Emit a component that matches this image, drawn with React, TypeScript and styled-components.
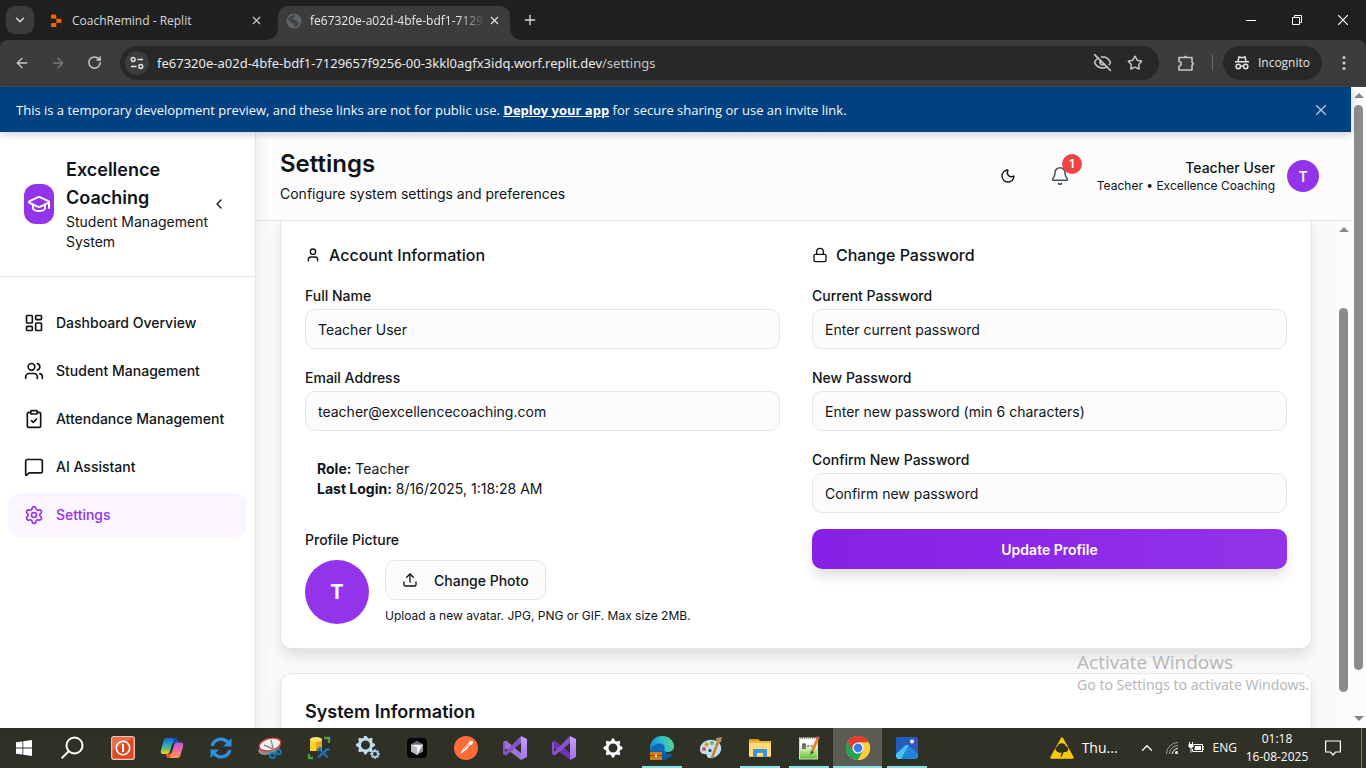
import React from "react";
import styled, { createGlobalStyle, css } from "styled-components";
import {
  ArrowLeft, ArrowRight, Bell, ChevronDown, ChevronLeft, ChevronUp, ClipboardCheck, EyeOff,
  GraduationCap, LayoutDashboard, Lock, MessageSquare, Moon, Plus,
  RotateCw, Settings as SettingsIcon, Star, Upload, User, Users, X,
} from "lucide-react";

const inter = `Inter, "Liberation Sans", sans-serif`;
const system = `"Open Sans", "Noto Sans", sans-serif`;
const systemWide = `"Noto Sans", "Open Sans", sans-serif`;
const ink = "#0f1419";
const line = "#e1e7f2";
const purple = "#9333ea";

const GlobalStyle = createGlobalStyle`
  *, *::before, *::after { box-sizing: border-box; }
  body { margin: 0; font-family: ${inter}; color: ${ink}; }
  h1, h2, h3, p { margin: 0; }
  button { border: 0; padding: 0; background: none; font: inherit; color: inherit; cursor: pointer; }
  svg { display: block; flex: none; }
`;

const Screen = styled.div`
  height: 100vh;
  display: flex;
  flex-direction: column;
  overflow: hidden;
`;

/* Browser window */
const TabStrip = styled.div`
  flex: none;
  height: 40px;
  display: flex;
  align-items: flex-end;
  background: #1f2120;
  color: #d8d9d9;
  font: 12px/16px ${system};
`;
const TabMenu = styled.button`
  width: 28px;
  height: 28px;
  margin: 0 6px 6px;
  display: grid;
  place-items: center;
  border-radius: 9px;
  background: #3c3c3c;
`;
const Tab = styled.div<{ $active?: boolean }>`
  position: relative;
  width: ${(p) => (p.$active ? 232 : 238)}px;
  height: 34px;
  padding: 0 ${(p) => (p.$active ? 8 : 14)}px 5px 8px;
  display: flex;
  align-items: center;
  gap: 8px;
  border-radius: 10px 10px 0 0;
  ${(p) =>
    p.$active &&
    css`
      background: #3c3c3c;
      color: #e8e8e8;
      &::before, &::after {
        content: "";
        position: absolute;
        bottom: 0;
        width: 10px;
        height: 10px;
      }
      &::before { left: -10px; background: radial-gradient(circle at 0 0, transparent 9px, #3c3c3c 10px); }
      &::after { right: -10px; background: radial-gradient(circle at 100% 0, transparent 9px, #3c3c3c 10px); }
    `}
`;
const TabTitle = styled.span<{ $fade?: boolean }>`
  flex: 1;
  min-width: 0;
  white-space: nowrap;
  ${(p) =>
    p.$fade &&
    css`
      margin-right: -8px;
      mask-image: linear-gradient(90deg, #000 84%, transparent);
    `}
`;
const TabButton = styled.button`
  width: 16px;
  height: 16px;
  display: grid;
  place-items: center;
`;
const NewTab = styled(TabButton)`
  margin: 0 0 12px 12px;
`;
const WindowButtons = styled.div`
  margin-left: auto;
  height: 40px;
  display: flex;
  color: #fff;
`;
const WindowButton = styled.button`
  width: 46px;
  display: grid;
  place-items: center;
`;
const ToolbarBack = styled.div`
  flex: none;
  background: #1f2120;
`;
const Toolbar = styled.div`
  height: 47px;
  padding: 0 12px 1px;
  display: flex;
  align-items: center;
  background: #3c3c3c;
  border-bottom: 1px solid #4a4745;
  border-radius: 8px 8px 0 0;
  color: #c7c7c7;
  font: 13px/18px ${system};
`;
const NavButtons = styled.div`
  display: flex;
  gap: 16px;
  margin-right: 16px;
`;
const ToolButton = styled.button<{ $dim?: boolean }>`
  width: 20px;
  height: 20px;
  display: grid;
  place-items: center;
  opacity: ${(p) => (p.$dim ? 0.45 : 1)};
`;
const AddressBar = styled.div`
  flex: 1;
  height: 34px;
  padding: 0 14px 0 5px;
  display: flex;
  align-items: center;
  gap: 12px;
  border-radius: 17px;
  background: #282828;
`;
const SiteInfo = styled.button`
  width: 24px;
  height: 24px;
  display: grid;
  place-items: center;
  border-radius: 50%;
  background: #3c3c3c;
  color: #e3e3e3;
`;
const Url = styled.div`
  flex: 1;
  margin-left: -4px;
  white-space: nowrap;
  color: #c4c7c5;
  font: 13px/18px ${systemWide};
  span { color: #e8eaed; }
`;
const Divider = styled.span`
  width: 1px;
  height: 16px;
  margin: 0 10px 0 16px;
  background: #6a6a6a;
`;
const Incognito = styled.button`
  height: 34px;
  margin-right: 12px;
  padding: 0 12px 0 11px;
  display: flex;
  align-items: center;
  gap: 8px;
  border-radius: 17px;
  background: #282828;
  color: #e3e3e3;
  font: 12px/16px ${system};
`;
const ExtensionSlot = styled.div`
  margin-left: 17px;
`;

/* Scrollbars */
const Scrollbar = styled.div`
  flex: none;
  width: 15px;
  display: flex;
  flex-direction: column;
  align-items: center;
  background: #fcfcfc;
`;
const Arrow = styled.span<{ $down?: boolean }>`
  margin: ${(p) => (p.$down ? "5px 0 7px" : "6px 0 7px")};
  border: solid transparent;
  border-width: 0 5px 5px;
  border-bottom-color: #858585;
  ${(p) => p.$down && "transform: rotate(180deg);"}
`;
const Thumb = styled.span<{ $size: number }>`
  flex: ${(p) => p.$size};
  width: 9px;
  border-radius: 5px;
  background: #8b8b8b;
`;
const Track = styled.span<{ $size: number }>`
  flex: ${(p) => p.$size};
`;

/* Web page */
const Viewport = styled.div`
  flex: 1;
  min-height: 0;
  display: flex;
`;
const Page = styled.div`
  flex: 1;
  min-width: 0;
  display: flex;
  flex-direction: column;
`;
const Banner = styled.div`
  position: relative;
  z-index: 2;
  flex: none;
  height: 45px;
  padding: 0 22px 0 16px;
  display: flex;
  align-items: center;
  justify-content: space-between;
  background: #004182;
  box-shadow: 0 2px 8px rgba(0, 0, 0, 0.2);
  color: #f5f9fc;
  font: 13px/20px ${system};
  a { color: #fff; font-weight: 700; }
`;
const AppLayout = styled.div`
  flex: 1;
  min-height: 0;
  display: flex;
`;
const Sidebar = styled.aside`
  position: relative;
  z-index: 1;
  flex: none;
  width: 256px;
  border-right: 1px solid ${line};
  background: #fff;
  box-shadow: 4px 0 14px rgba(0, 0, 0, 0.06);
`;
const Brand = styled.div`
  padding: 24px;
  display: flex;
  align-items: center;
  border-bottom: 1px solid ${line};
`;
const Logo = styled.div`
  flex: none;
  width: 30px;
  height: 40px;
  margin-right: 12px;
  display: grid;
  place-items: center;
  border-radius: 12px;
  background: ${purple};
  color: #fff;
`;
const BrandText = styled.div`
  width: 145px;
  h2 { font-size: 18px; line-height: 28px; font-weight: 600; }
  p { font-size: 14px; line-height: 20px; }
`;
const Collapse = styled.button``;
const Nav = styled.nav`
  padding: 24px 8px;
  display: flex;
  flex-direction: column;
  gap: 4px;
`;
const NavLink = styled.a<{ $active?: boolean }>`
  height: 44px;
  padding: 0 16px;
  display: flex;
  align-items: center;
  gap: 12px;
  border-radius: 12px;
  background: ${(p) => (p.$active ? "#faf5ff" : "transparent")};
  color: ${(p) => (p.$active ? purple : ink)};
  font-size: 14px;
  line-height: 20px;
  font-weight: 500;
  text-decoration: none;
`;
const Content = styled.div`
  flex: 1;
  min-width: 0;
  display: flex;
  flex-direction: column;
  background: #fafafa;
`;
const Header = styled.header`
  flex: none;
  padding: 16px 32px 16px 24px;
  display: flex;
  align-items: center;
  justify-content: space-between;
  background: #fcfcfc;
  border-bottom: 1px solid ${line};
`;
const Heading = styled.div`
  h1 { font-size: 24px; line-height: 32px; font-weight: 600; }
  p { margin-top: 4px; font-size: 14px; line-height: 20px; }
`;
const HeaderActions = styled.div`
  display: flex;
  align-items: center;
`;
const IconButton = styled.button`
  position: relative;
  width: 36px;
  height: 36px;
  margin-right: 16px;
  display: grid;
  place-items: center;
  color: #414d5d;
`;
const Badge = styled.span`
  position: absolute;
  top: -4px;
  right: -4px;
  width: 20px;
  height: 20px;
  border-radius: 50%;
  background: #ef4444;
  color: #fff;
  font-size: 12px;
  line-height: 20px;
  font-weight: 600;
  text-align: center;
`;
const Account = styled.div`
  margin: 0 12px 0 3px;
  text-align: right;
  p { font-size: 14px; line-height: 20px; font-weight: 500; }
  span { display: block; font-size: 12px; line-height: 16px; }
`;
const Avatar = styled.div<{ $size: number }>`
  flex: none;
  width: ${(p) => p.$size}px;
  height: ${(p) => p.$size}px;
  display: grid;
  place-items: center;
  border-radius: 50%;
  background: ${purple};
  color: #fff;
  font-size: ${(p) => (p.$size > 40 ? 20 : 14)}px;
  font-weight: ${(p) => (p.$size > 40 ? 700 : 600)};
`;
const MainArea = styled.div`
  flex: 1;
  min-height: 0;
  display: flex;
`;
const Main = styled.main`
  flex: 1;
  min-width: 0;
  padding: 0 24px;
  overflow: hidden;
`;
const Card = styled.section<{ $open?: boolean }>`
  margin-bottom: 24px;
  padding: ${(p) => (p.$open ? "22px 24px 24px" : "24px")};
  border: 1px solid ${line};
  ${(p) => p.$open && "border-top: 0;"}
  border-radius: ${(p) => (p.$open ? "0 0 12px 12px" : "12px")};
  background: #fff;
  box-shadow: 0 8px 16px -2px rgba(0, 0, 0, 0.13);
  > h2 { font-size: 18px; line-height: 28px; font-weight: 600; }
`;
const Columns = styled.div`
  display: grid;
  grid-template-columns: 1fr 1fr;
  gap: 32px;
`;
const Group = styled.form`
  display: flex;
  flex-direction: column;
  gap: 16px;
`;
const GroupTitle = styled.h3`
  display: flex;
  align-items: center;
  gap: 8px;
  font-size: 16px;
  line-height: 24px;
  font-weight: 500;
`;
const Label = styled.label`
  display: block;
  font-size: 14px;
  line-height: 26px;
  font-weight: 500;
`;
const Input = styled.input`
  display: block;
  width: 100%;
  height: 40px;
  padding: 0 12px;
  border: 1px solid ${line};
  border-radius: 10px;
  background: #fcfcfc;
  color: ${ink};
  font: 14px/20px ${inter};
  &::placeholder { color: ${ink}; opacity: 1; }
`;
const Facts = styled.div`
  padding: 12px;
  font-size: 14px;
  line-height: 20px;
`;
const PhotoRow = styled.div`
  margin-top: 7px;
  display: flex;
  gap: 16px;
  p { margin-top: 8px; font-size: 12px; line-height: 16px; }
`;
const PhotoButton = styled.button`
  height: 40px;
  padding: 0 16px;
  display: flex;
  align-items: center;
  gap: 16px;
  border: 1px solid ${line};
  border-radius: 10px;
  background: #fcfcfc;
  font-size: 14px;
  font-weight: 500;
`;
const Submit = styled.button`
  height: 40px;
  border-radius: 10px;
  background: linear-gradient(90deg, #8620e6, ${purple});
  box-shadow: 0 8px 14px -2px rgba(0, 0, 0, 0.14);
  color: #fff;
  font-size: 14px;
  font-weight: 600;
`;
const Watermark = styled.div`
  position: absolute;
  right: 57px;
  bottom: 73px;
  z-index: 5;
  color: #b7b7b7;
  font: 14px/20px ${systemWide};
  pointer-events: none;
  strong { display: block; font: 19px/26px ${system}; }
`;

/* Desktop taskbar */
const Taskbar = styled.footer`
  flex: none;
  height: 40px;
  display: flex;
  background: #2f3026;
  color: #fff;
  font: 12px/18px ${system};
`;
const TaskButton = styled.button<{ $wide?: number; $active?: boolean; $open?: boolean }>`
  flex: none;
  width: ${(p) => p.$wide ?? 49}px;
  display: grid;
  place-items: center;
  background: ${(p) => (p.$active ? "#5c5c54" : "transparent")};
  background-image: ${(p) => (p.$open ? "linear-gradient(#86e0e6, #86e0e6)" : "none")};
  background-repeat: no-repeat;
  background-position: bottom center;
  background-size: ${(p) => (p.$active ? "100%" : "40px")} 2px;
`;
const Tray = styled.div`
  margin-left: auto;
  display: flex;
  align-items: center;
`;
const Weather = styled.button`
  margin-right: 20px;
  display: flex;
  align-items: center;
  gap: 8px;
  font-size: 14px;
`;
const TrayIcons = styled.div`
  display: flex;
  align-items: center;
  gap: 9px;
`;
const Clock = styled.div`
  width: 80px;
  margin-right: 2px;
  text-align: center;
`;
const ShowDesktop = styled.button`
  width: 5px;
  height: 40px;
  margin-left: 14px;
  border-left: 1px solid #77776f;
`;

const navItems = [
  { label: "Dashboard Overview", Icon: LayoutDashboard },
  { label: "Student Management", Icon: Users },
  { label: "Attendance Management", Icon: ClipboardCheck },
  { label: "AI Assistant", Icon: MessageSquare },
  { label: "Settings", Icon: SettingsIcon, active: true },
];

const gearPath = (cx: number, cy: number, r: number) => {
  const n = 8;
  let d = "";
  for (let i = 0; i < n * 4; i++) {
    const a = ((i - 0.5) / (n * 4)) * Math.PI * 2;
    const q = i % 4 < 2 ? r : r * 0.78;
    d += `${i ? "L" : "M"}${(cx + q * Math.cos(a)).toFixed(2)} ${(cy + q * Math.sin(a)).toFixed(2)}`;
  }
  return d + "Z";
};

const VisualStudio = ({ id, dark }: { id: string; dark: string }) => (
  <svg width="24" height="24" viewBox="0 0 24 24">
    <defs><linearGradient id={id} x2="0" y2="1"><stop stopColor="#c8a0fb" /><stop offset="1" stopColor="#a470ec" /></linearGradient></defs>
    <path d="M0 6l3-1.500L18 17v7L3 12.500 2 14v3L0 18z" fill={dark} />
    <path d="M0 18V6l2 1v10l1 2.500zM3 19.500L0 18l18-18v7z" fill="#8654ca" />
    <path d="M18 0l6 3v18l-6 3z" fill={`url(#${id})`} />
  </svg>
);

const tasks: { name: string; wide?: number; open?: boolean; active?: boolean; art: React.ReactNode }[] = [
  { name: "Start", wide: 48, art: (
    <svg width="16" height="16" viewBox="0 0 16 16" fill="#fff"><path d="M0 2.300L6.500 1.400v6.200H0zM7.300 1.300L16 0v7.600H7.300zM0 8.400h6.500v6.200L0 13.700zM7.300 8.400H16V16l-8.700-1.300z" /></svg>) },
  { name: "Search", wide: 50, art: (
    <svg width="24" height="24" viewBox="0 0 24 24" fill="none" stroke="#fff" strokeWidth="2"><circle cx="13.500" cy="9.500" r="8" /><path d="M7.700 15.300L.7 22.300" /></svg>) },
  { name: "Power", art: (
    <svg width="24" height="24" viewBox="0 0 24 24"><rect x=".7" y=".7" width="22.600" height="22.600" rx="2" fill="#dc4a24" stroke="#f3c4b4" strokeWidth="1.300" /><path d="M1.500 1.500h21L1.500 14z" fill="#ee8567" opacity=".6" /><circle cx="12" cy="12" r="6.700" fill="none" stroke="#fff" strokeWidth="1.600" /><path d="M12 8v8" stroke="#fff" strokeWidth="2" /></svg>) },
  { name: "Copilot", art: (
    <svg width="24" height="24" viewBox="0 0 24 24">
      <defs>
        <linearGradient id="cpA" x2="0" y2="1"><stop stopColor="#1b62df" /><stop offset=".45" stopColor="#28a9c9" /><stop offset=".7" stopColor="#6fc35b" /><stop offset="1" stopColor="#f5ce21" /></linearGradient>
        <linearGradient id="cpB" x2="0" y2="1"><stop stopColor="#b05be8" /><stop offset=".5" stopColor="#ee6b9b" /><stop offset="1" stopColor="#fb9b52" /></linearGradient>
      </defs>
      <path d="M7 2h8c2 0 2.500 2 3 4.500h-3c-2 0-2.800 1-3.300 3L10 15c-.6 2-1.500 3-3 3H3c-2 0-2.600-1.500-2-4L3.500 5C4.200 3 5 2 7 2z" fill="url(#cpA)" />
      <path d="M13 2h2c2 0 2.500 2 3 4.500h-3L13.500 7z" fill="#174bb2" />
      <path d="M17 22H9c-2 0-2.500-2-3-4h3c2 0 2.800-1 3.300-3L14 9.500c.6-2 1.500-3 3-3h4c2 0 2.600 1.500 2 4L20.500 19c-.6 2-1.500 3-3.500 3z" fill="url(#cpB)" />
      <path d="M6 18h3c2 0 2.800-1 3.300-3L10 22H9c-2 0-2.500-2-3-4z" fill="#e8552c" />
    </svg>) },
  { name: "Sync", art: (
    <svg width="24" height="24" viewBox="0 0 24 24" fill="none" stroke="#2f8fe3" strokeWidth="3.200"><path d="M3 10a9.200 9.200 0 0 1 16-3.500M21 14a9.200 9.200 0 0 1-16 3.500" /><path d="M22.500 2v8.500H14zM1.500 22v-8.500H10z" fill="#2f8fe3" stroke="none" /></svg>) },
  { name: "Snipping Tool", art: (
    <svg width="24" height="24" viewBox="0 0 24 24"><ellipse cx="11" cy="13" rx="11" ry="5.500" transform="rotate(-14 11 13)" fill="#8c8c8c" /><ellipse cx="12" cy="8.500" rx="11" ry="6" transform="rotate(-14 12 8.500)" fill="#f6f3f3" stroke="#d53b3b" strokeWidth="1.300" /><path d="M6 9l9 4 2 1.500M13 4l2.500 10" stroke="#8b9198" strokeWidth="1.500" /><circle cx="14.500" cy="19.500" r="2.500" fill="none" stroke="#187bb8" strokeWidth="1.800" /><circle cx="20.500" cy="16" r="2.300" fill="none" stroke="#187bb8" strokeWidth="1.800" /></svg>) },
  { name: "Database Tools", art: (
    <svg width="24" height="24" viewBox="0 0 24 24"><path d="M3 3.500h12V15H3z" fill="#fbd12b" /><path d="M9 5h6v10H9z" fill="#eda70c" /><ellipse cx="9" cy="3.500" rx="6" ry="2.500" fill="#ffdf73" /><path d="M17 2h5v5M2 18v4h4" fill="none" stroke="#4a9e49" strokeWidth="2.400" /><path d="M12 13l9 8.500M20.500 13L11 21.500" stroke="#1c70b6" strokeWidth="2.400" /><path d="M10 14.500l4-3M18.500 13.500h4.500" stroke="#1c70b6" strokeWidth="2.200" /></svg>) },
  { name: "Services", art: (
    <svg width="24" height="24" viewBox="0 0 24 24" fillRule="evenodd"><path d={gearPath(9.5, 9, 9.5) + "M14 9a4.500 4.500 0 1 0-9 0 4.500 4.500 0 0 0 9 0Z"} fill="#c3dcec" /><path d={gearPath(19, 18, 5) + "M21 18a2 2 0 1 0-4 0 2 2 0 0 0 4 0Z"} fill="#a5cde7" /></svg>) },
  { name: "Cursor", art: (
    <svg width="20" height="20" viewBox="0 0 20 20"><rect width="20" height="20" rx="4" fill="#050505" /><path d="M10 3l6 3.500v7L10 17l-6-3.500v-7z" fill="#8f8f8f" /><path d="M4 6.500h12L10 17V10z" fill="#f2f2f2" /><path d="M10 3l6 3.500H4z" fill="#666" /><path d="M4 6.500L10 10v7l-6-3.500z" fill="#b9b9b9" /></svg>) },
  { name: "Postman", art: (
    <svg width="24" height="24" viewBox="0 0 24 24"><circle cx="12" cy="12" r="12" fill="#ff6c37" /><path d="M15 6.500c1-2 3.500-2.500 4-1s-1 3.500-3 3.500l-4 5-6.500 4.500 4-6z" fill="#fff" /><path d="M10 13l5-5" stroke="#ff6c37" strokeWidth=".9" /></svg>) },
  { name: "Visual Studio 2019", art: <VisualStudio id="vsA" dark="#9d76d4" /> },
  { name: "Visual Studio", art: <VisualStudio id="vsB" dark="#6a34b0" /> },
  { name: "Settings", art: (
    <svg width="20" height="20" viewBox="0 0 20 20" fillRule="evenodd" fill="#fff"><path d={gearPath(10, 10, 9.5) + "M14.500 10a4.500 4.500 0 1 0-9 0 4.500 4.500 0 0 0 9 0Z"} /></svg>) },
  { name: "Edge", open: true, art: (
    <svg width="24" height="24" viewBox="0 0 24 24">
      <defs><linearGradient id="edge" y1=".6" y2=".3"><stop stopColor="#178bd4" /><stop offset=".55" stopColor="#2cc0cf" /><stop offset="1" stopColor="#63d76d" /></linearGradient></defs>
      <circle cx="12" cy="12" r="12" fill="#1168b8" />
      <path d="M0 11C1 4 6 0 12 0c7 0 12 5 12 10 0 4-3 6-6 6-3.500 0-4.500-1.500-4-2.500 1.500-2 .5-6-4-6C6 7.500 2 9 0 14z" fill="url(#edge)" />
      <path d="M14 13.500c-.5 1 .5 2.500 4 2.500 2 0 4-.5 5.500-2.500l.5 2-2.500 3-5-.5z" fill="#2f3026" />
      <path d="M11 12c0 5 4 8 10 6.500-2 3.500-5 5.500-9 5.500z" fill="#0e58a2" />
      <rect y="16" width="12" height="8" fill="#d17d14" /><path d="M0 19.500h12" stroke="#83460c" /><rect x="5" y="18.500" width="2" height="2.500" fill="#ffe08a" />
    </svg>) },
  { name: "Paint", art: (
    <svg width="24" height="24" viewBox="0 0 24 24"><path d="M1 13C1 7 8 3 14 4s9 5 8 10-7 9-12 8c-3-.5-1-4-4-4s-5-1-5-5z" fill="#c1e0ef" /><circle cx="5" cy="13" r="2" fill="#e04b3a" /><circle cx="7.500" cy="8.500" r="2" fill="#f08b28" /><circle cx="13" cy="7" r="2" fill="#71b440" /><circle cx="11" cy="14.500" r="1.500" fill="#2f3026" /><path d="M19 6l-6 16" stroke="#cc7e35" strokeWidth="2.500" /><path d="M17 2l6-1-1 5-4 2z" fill="#b98b64" /></svg>) },
  { name: "File Explorer", open: true, art: (
    <svg width="22" height="20" viewBox="0 0 22 20"><path d="M0 1h9l2 2h11v16H0z" fill="#f6b62c" /><path d="M0 5h22v13H0z" fill="#ffdc77" /><path d="M4 19v-8h14v8h-4v-4H8v4z" fill="#3b94dd" /><path d="M0 1h9v2H0z" fill="#dd9a17" /></svg>) },
  { name: "Notepad++", open: true, art: (
    <svg width="24" height="24" viewBox="0 0 24 24"><defs><linearGradient id="npp" x2="0" y2="1"><stop offset=".3" stopColor="#fff" /><stop offset="1" stopColor="#5dc11e" /></linearGradient></defs><rect x="2.500" y="2" width="18" height="21" fill="url(#npp)" stroke="#d9d9d9" /><path d="M3 2h17" stroke="#777" strokeWidth="1.500" strokeDasharray="1 1" /><path d="M6 13V8h2v5M10 10h2M13.500 10h2" stroke="#222" strokeWidth="1.200" fill="none" /><path d="M20.500 3L15 16" stroke="#df8d22" strokeWidth="3" /><path d="M14 15l3 1-3.500 3z" fill="#443" /><path d="M20 0l3 1.500-1 2-3-1z" fill="#d9564a" /></svg>) },
  { name: "Chrome", open: true, active: true, art: (
    <svg width="24" height="24" viewBox="0 0 24 24"><circle cx="12" cy="12" r="12" fill="#ffcd40" /><path d="M12 12L1.600 6A12 12 0 0 0 12 24l5.200-9z" fill="#23a455" /><path d="M12 6.500h10.700A12 12 0 0 0 1.600 6L7 15z" fill="#e33b2e" /><path d="M12 6.500h10.700A12 12 0 0 1 12 24l5-9z" fill="#ffcd40" /><circle cx="12" cy="12" r="5.600" fill="#fff" /><circle cx="12" cy="12" r="4.400" fill="#3b7ded" /></svg>) },
  { name: "Photos", open: true, art: (
    <svg width="22" height="22" viewBox="0 0 22 22"><defs><linearGradient id="pho" x2="1" y2="1"><stop stopColor="#1b5fbd" /><stop offset="1" stopColor="#3e55b6" /></linearGradient></defs><rect width="22" height="22" rx="2" fill="url(#pho)" /><path d="M0 17L9.500 8.500c1-.8 2-.8 3 0L22 17v3l-2 2H2l-2-2z" fill="#2186da" /><path d="M0 17L9.500 8.500c1-.8 2-.8 3 0L5 22H2l-2-2z" fill="#49c5f4" /><circle cx="16" cy="4.500" r="2" fill="#fff" /></svg>) },
];

const Field = ({ id, label, ...rest }: { id: string; label: string } & React.InputHTMLAttributes<HTMLInputElement>) => (
  <div>
    <Label htmlFor={id}>{label}</Label>
    <Input id={id} {...rest} />
  </div>
);

export default function App() {
  return (
    <Screen>
      <GlobalStyle />
      <TabStrip>
        <TabMenu aria-label="Search tabs"><ChevronDown size={14} strokeWidth={2.5} /></TabMenu>
        <Tab>
          <svg width="16" height="16" viewBox="0 0 16 16" fill="#f26207"><path d="M3 2.500C3 2 3.400 1.600 4 1.600h3.500c.5 0 .8.400.8.900v3.200H4c-.6 0-1-.4-1-.9zM8.300 5.700h4.300c.5 0 .9.400.9.900V9c0 .5-.4.900-.9.900H8.300zM3 10.800c0-.5.400-.9 1-.9h4.300v3.300c0 .5-.3.900-.8.900H4c-.6 0-1-.4-1-.9z" /></svg>
          <TabTitle>CoachRemind - Replit</TabTitle>
          <TabButton aria-label="Close tab"><X size={13} /></TabButton>
        </Tab>
        <Tab $active>
          <svg width="16" height="16" viewBox="0 0 16 16"><circle cx="8" cy="8" r="7.500" fill="#5f6469" /><path d="M2 6c2-3 4-4 7-4 0 2-1 2-2 3s1 2 3 2 1 3 3 3c0 2-2 4-5 4 0-2 1-3-1-4S3 9 2 6z" fill="#3c3c3c" opacity=".85" /></svg>
          <TabTitle $fade>fe67320e-a02d-4bfe-bdf1-7129</TabTitle>
          <TabButton aria-label="Close tab"><X size={13} /></TabButton>
        </Tab>
        <NewTab aria-label="New tab"><Plus size={16} /></NewTab>
        <WindowButtons>
          <WindowButton aria-label="Minimize"><svg width="10" height="10" viewBox="0 0 10 10"><path d="M0 5.500h10" stroke="#fff" /></svg></WindowButton>
          <WindowButton aria-label="Restore"><svg width="10" height="10" viewBox="0 0 10 10" fill="none" stroke="#fff"><path d="M.5 2.500h7v7h-7zM2.500 2.500v-2h7v7h-2" /></svg></WindowButton>
          <WindowButton aria-label="Close"><svg width="10" height="10" viewBox="0 0 10 10"><path d="M0 0l10 10M10 0L0 10" stroke="#fff" strokeWidth="1.200" /></svg></WindowButton>
        </WindowButtons>
      </TabStrip>
      <ToolbarBack>
        <Toolbar>
          <NavButtons>
            <ToolButton aria-label="Back"><ArrowLeft size={16} /></ToolButton>
            <ToolButton aria-label="Forward" $dim><ArrowRight size={16} /></ToolButton>
            <ToolButton aria-label="Reload"><RotateCw size={15} strokeWidth={2.4} /></ToolButton>
          </NavButtons>
          <AddressBar>
            <SiteInfo aria-label="Site information">
              <svg width="14" height="14" viewBox="0 0 14 14" fill="none" stroke="currentColor" strokeWidth="1.500"><circle cx="3.200" cy="3.500" r="1.900" /><path d="M7.500 3.500H13M1 10.500h5.500" /><circle cx="10.800" cy="10.500" r="1.900" /></svg>
            </SiteInfo>
            <Url><span>fe67320e-a02d-4bfe-bdf1-7129657f9256-00-3kkl0agfx3idq.worf.replit.dev</span>/settings</Url>
            <ToolButton aria-label="Third-party cookies blocked"><EyeOff size={19} strokeWidth={2} /></ToolButton>
            <ToolButton aria-label="Bookmark this tab"><Star size={16} strokeWidth={2.2} /></ToolButton>
          </AddressBar>
          <ExtensionSlot>
            <ToolButton aria-label="Extensions">
              <svg width="18" height="18" viewBox="0 0 18 18" fill="none" stroke="currentColor" strokeWidth="1.600" strokeLinejoin="round"><path d="M2 3.500h13V8.500c1.300 0 1.300 2.500 0 2.500v5H2v-4c2.800 0 2.800-4.500 0-4.500z" /><path d="M7 3.500c0-2.300 3-2.300 3 0zM15 8c2 0 2 3.200 0 3.200z" fill="currentColor" stroke="none" /></svg>
            </ToolButton>
          </ExtensionSlot>
          <Divider />
          <Incognito>
            <svg width="16" height="16" viewBox="0 0 16 16" fill="none" stroke="currentColor" strokeWidth="1.500"><path d="M4 6l1-4 3 .8L11 2l1 4M1 6.700h14" /><circle cx="4.300" cy="11.500" r="2.200" /><circle cx="11.700" cy="11.500" r="2.200" /><path d="M6.500 11.200c1-.7 2-.7 3 0" /></svg>
            Incognito
          </Incognito>
          <ToolButton aria-label="Menu">
            <svg width="4" height="16" viewBox="0 0 4 16" fill="currentColor"><circle cx="2" cy="2.500" r="1.600" /><circle cx="2" cy="8" r="1.600" /><circle cx="2" cy="13.500" r="1.600" /></svg>
          </ToolButton>
        </Toolbar>
      </ToolbarBack>

      <Viewport>
        <Page>
          <Banner>
            <span>This is a temporary development preview, and these links are not for public use. <a href="#deploy">Deploy your app</a> for secure sharing or use an invite link.</span>
            <TabButton aria-label="Dismiss"><svg width="10" height="10" viewBox="0 0 10 10"><path d="M0 0l10 10M10 0L0 10" stroke="#b7cbe0" strokeWidth="1.300" /></svg></TabButton>
          </Banner>
          <AppLayout>
            <Sidebar>
              <Brand>
                <Logo><GraduationCap size={24} /></Logo>
                <BrandText>
                  <h2>Excellence Coaching</h2>
                  <p>Student Management System</p>
                </BrandText>
                <Collapse aria-label="Collapse sidebar"><ChevronLeft size={16} /></Collapse>
              </Brand>
              <Nav>
                {navItems.map(({ label, Icon, active }) => (
                  <NavLink key={label} href="#" $active={active}><Icon size={20} />{label}</NavLink>
                ))}
              </Nav>
            </Sidebar>
            <Content>
              <Header>
                <Heading>
                  <h1>Settings</h1>
                  <p>Configure system settings and preferences</p>
                </Heading>
                <HeaderActions>
                  <IconButton aria-label="Toggle theme"><Moon size={16} color={ink} /></IconButton>
                  <IconButton aria-label="Notifications"><Bell size={20} strokeWidth={1.8} /><Badge>1</Badge></IconButton>
                  <Account>
                    <p>Teacher User</p>
                    <span>Teacher • Excellence Coaching</span>
                  </Account>
                  <Avatar $size={32}>T</Avatar>
                </HeaderActions>
              </Header>
              <MainArea>
                <Main>
                  <Card $open>
                    <Columns>
                      <Group>
                        <GroupTitle><User size={16} />Account Information</GroupTitle>
                        <Field id="name" label="Full Name" defaultValue="Teacher User" />
                        <Field id="email" label="Email Address" type="email" defaultValue="teacher@excellencecoaching.com" />
                        <Facts>
                          <p><strong>Role:</strong> Teacher</p>
                          <p><strong>Last Login:</strong> 8/16/2025, 1:18:28 AM</p>
                        </Facts>
                        <div>
                          <Label htmlFor="photo">Profile Picture</Label>
                          <PhotoRow>
                            <Avatar $size={64}>T</Avatar>
                            <div>
                              <PhotoButton id="photo" type="button"><Upload size={16} />Change Photo</PhotoButton>
                              <p>Upload a new avatar. JPG, PNG or GIF. Max size 2MB.</p>
                            </div>
                          </PhotoRow>
                        </div>
                      </Group>
                      <Group>
                        <GroupTitle><Lock size={16} />Change Password</GroupTitle>
                        <Field id="current" label="Current Password" type="password" placeholder="Enter current password" />
                        <Field id="new" label="New Password" type="password" placeholder="Enter new password (min 6 characters)" />
                        <Field id="confirm" label="Confirm New Password" type="password" placeholder="Confirm new password" />
                        <Submit type="button">Update Profile</Submit>
                      </Group>
                    </Columns>
                  </Card>
                  <Card>
                    <h2>System Information</h2>
                  </Card>
                </Main>
                <Scrollbar><Arrow /><Track $size={69} /><Thumb $size={384} /><Track $size={36} /></Scrollbar>
              </MainArea>
            </Content>
          </AppLayout>
        </Page>
        <Scrollbar><Arrow /><Thumb $size={565} /><Track $size={41} /><Arrow $down /></Scrollbar>
      </Viewport>

      <Watermark><strong>Activate Windows</strong>Go to Settings to activate Windows.</Watermark>

      <Taskbar>
        {tasks.map((t) => (
          <TaskButton key={t.name} aria-label={t.name} $wide={t.wide} $open={t.open} $active={t.active}>{t.art}</TaskButton>
        ))}
        <Tray>
          <Weather>
            <svg width="24" height="22" viewBox="0 0 24 22"><path d="M12 1.500L22.500 20.500h-21z" fill="#f7c60f" stroke="#f7c60f" strokeWidth="2.500" strokeLinejoin="round" /><path d="M8 15a3 3 0 0 1-.5-5.800 4.500 4.500 0 0 1 8.500 0A3 3 0 0 1 16 15z" fill="#33301b" /><path d="M13 11l-3 4h3l-2 4.500" stroke="#33301b" strokeWidth="1.400" fill="none" /></svg>
            Thu...
          </Weather>
          <TrayIcons>
            <ChevronUp size={18} strokeWidth={1.6} />
            <svg width="14" height="14" viewBox="0 0 14 14" fill="none" stroke="#fff"><circle cx="11.500" cy="11.500" r="1.500" fill="#fff" stroke="none" /><path d="M7.500 13A5.500 5.500 0 0 1 13 7.500" /><path d="M4.500 13A8.500 8.500 0 0 1 13 4.500M1.500 13A11.500 11.500 0 0 1 13 1.500" opacity=".55" /></svg>
            <svg width="16" height="14" viewBox="0 0 16 14" fill="none" stroke="#fff"><path d="M6 3.500h8.500v7H4.500V8" /><path d="M14.500 5.500H16v3h-1.500" /><path d="M7 5h6v4H6.500z" fill="#fff" stroke="none" /><path d="M1.500 1v2M4.500 1v2M3 7v4.500" /><path d="M.5 3h5v2.500L4 7H2L.5 5.500z" fill="#fff" stroke="none" /></svg>
            <span>ENG</span>
          </TrayIcons>
          <Clock>01:18<br />16-08-2025</Clock>
          <TaskButton $wide={28} aria-label="Notifications">
            <svg width="16" height="16" viewBox="0 0 16 16" fill="none" stroke="#fff" strokeWidth="1.200"><path d="M.6 1h14.800v11H10.500L8 15l-2.500-3H.6z" /></svg>
          </TaskButton>
          <ShowDesktop aria-label="Show desktop" />
        </Tray>
      </Taskbar>
    </Screen>
  );
}
